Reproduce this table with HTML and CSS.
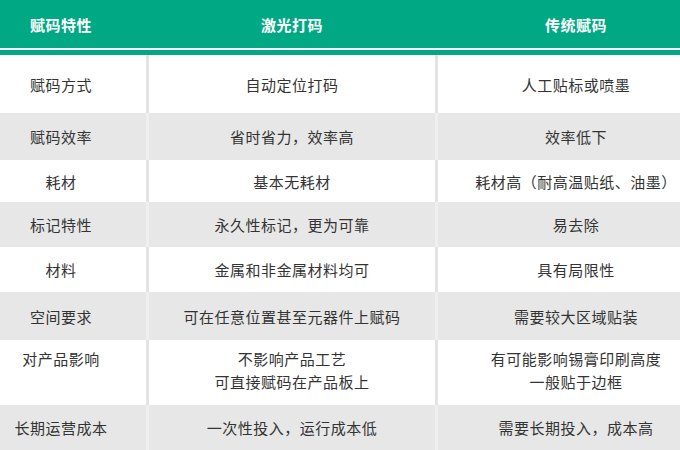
FILE: index.html
```html
<!DOCTYPE html>
<html lang="zh">
<head>
<meta charset="utf-8">
<link rel="stylesheet" href="styles.css">
</head>
<body>
<div class="table">
  <div class="head">
    <div class="cell c1">赋码特性</div>
    <div class="cell c2">激光打码</div>
    <div class="cell c3">传统赋码</div>
  </div>
  <div class="band"></div>
  <div class="row white h58">
    <div class="cell c1">赋码方式</div>
    <div class="cell c2">自动定位打码</div>
    <div class="cell c3">人工贴标或喷墨</div>
  </div>
  <div class="row grey h47">
    <div class="cell c1">赋码效率</div>
    <div class="cell c2">省时省力，效率高</div>
    <div class="cell c3">效率低下</div>
  </div>
  <div class="row white h42">
    <div class="cell c1">耗材</div>
    <div class="cell c2">基本无耗材</div>
    <div class="cell c3">耗材高（耐高温贴纸、油墨）</div>
  </div>
  <div class="row grey h45">
    <div class="cell c1">标记特性</div>
    <div class="cell c2">永久性标记，更为可靠</div>
    <div class="cell c3">易去除</div>
  </div>
  <div class="row white h45">
    <div class="cell c1">材料</div>
    <div class="cell c2">金属和非金属材料均可</div>
    <div class="cell c3">具有局限性</div>
  </div>
  <div class="row grey h48">
    <div class="cell c1">空间要求</div>
    <div class="cell c2">可在任意位置甚至元器件上赋码</div>
    <div class="cell c3">需要较大区域贴装</div>
  </div>
  <div class="row white h65">
    <div class="cell c1 top">对产品影响</div>
    <div class="cell c2 top">不影响产品工艺<br>可直接赋码在产品板上</div>
    <div class="cell c3 top">有可能影响锡膏印刷高度<br>一般贴于边框</div>
  </div>
  <div class="row grey h45">
    <div class="cell c1">长期运营成本</div>
    <div class="cell c2">一次性投入，运行成本低</div>
    <div class="cell c3">需要长期投入，成本高</div>
  </div>
</div>
</body>
</html>
```
FILE: styles.css
```css
html, body {
  margin: 0;
  padding: 0;
  background: #ffffff;
}
.table {
  width: 680px;
  height: 450px;
  overflow: hidden;
  font-family: "Noto Sans CJK SC", "Noto Sans", sans-serif;
  font-size: 15px;
  color: #333333;
}
.head {
  display: grid;
  grid-template-columns: 146px 286px 1fr;
  column-gap: 3px;
  height: 48px;
  background: #00a884;
  color: #ffffff;
  font-weight: bold;
  border-bottom: 2px solid #ffffff;
}
.band {
  height: 5px;
  background: #00a884;
}
.row {
  display: grid;
  grid-template-columns: 146px 286px 1fr;
  column-gap: 3px;
}
.row.white {
  background: #e3e3e3;
}
.row.white .cell {
  background: #ffffff;
}
.row.grey {
  background: #efefef;
}
.row.grey .cell {
  background: #e7e7e7;
}
.cell {
  display: flex;
  align-items: center;
  justify-content: center;
  text-align: center;
  line-height: 23px;
  letter-spacing: 0.5px;
}
.cell.top {
  align-items: flex-start;
  padding-top: 7px;
}
.c1 {
  padding-right: 24px;
}
.c3 {
  padding-left: 34px;
}
.h58 { height: 58px; }
.h47 { height: 47px; }
.h42 { height: 42px; }
.h45 { height: 45px; }
.h48 { height: 48px; }
.h65 { height: 65px; }
```
